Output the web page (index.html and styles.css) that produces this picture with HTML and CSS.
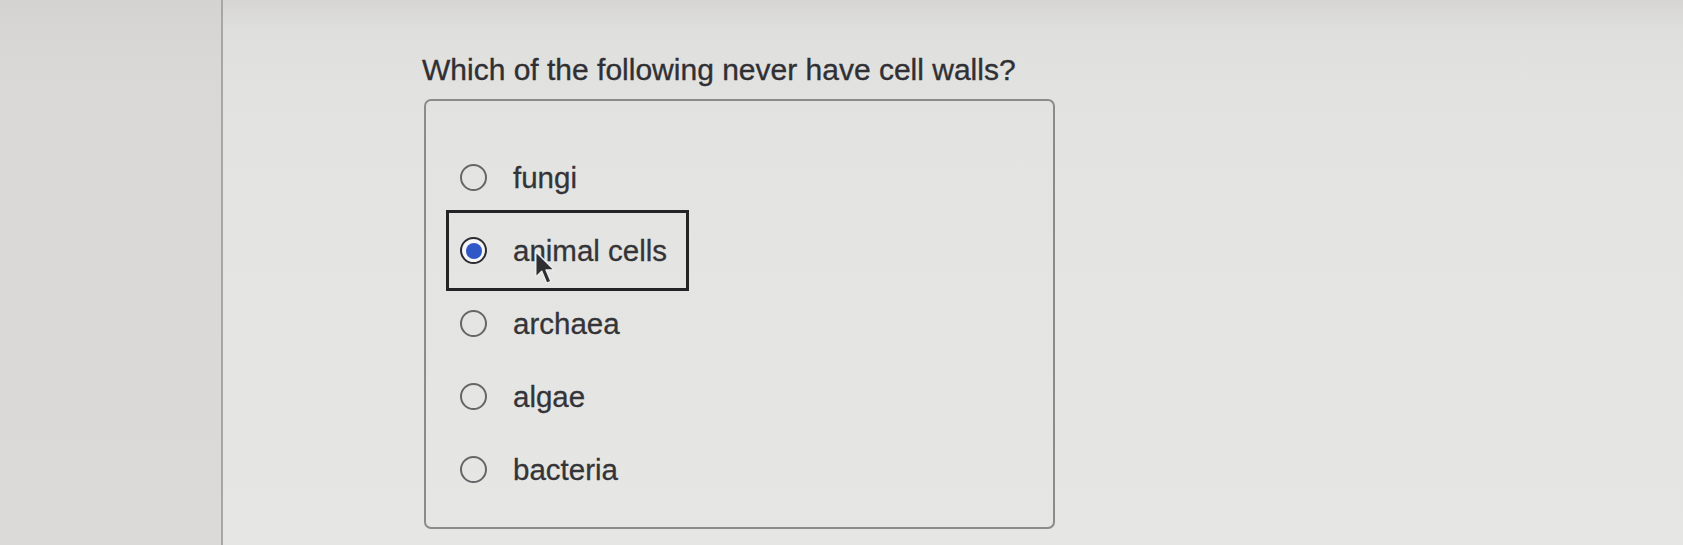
FILE: index.html
```html
<!DOCTYPE html>
<html lang="en">
<head>
<meta charset="utf-8">
<title>Question</title>
<link rel="stylesheet" href="styles.css">
</head>
<body>
<div class="screen">
  <aside class="sidebar"></aside>
  <main class="content">
    <h1 class="question">Which of the following never have cell walls?</h1>
    <div class="choices">
      <label class="choice"><span class="radio"></span><span class="label">fungi</span></label>
      <label class="choice focused"><span class="radio checked"></span><span class="label">animal cells</span></label>
      <label class="choice"><span class="radio"></span><span class="label">archaea</span></label>
      <label class="choice"><span class="radio"></span><span class="label">algae</span></label>
      <label class="choice"><span class="radio"></span><span class="label">bacteria</span></label>
    </div>
  </main>
</div>
<svg class="cursor" width="22" height="36" viewBox="0 0 20 33">
  <path d="M1.5 1.5 L1.5 25 L7 19.5 L11.5 30.5 L15.5 28.8 L11 18.3 L18.5 18.3 Z" fill="#2e2e32" stroke="#ececec" stroke-width="1.4" stroke-linejoin="round"/>
</svg>
</body>
</html>
```
FILE: styles.css
```css
html, body {
  margin: 0;
  padding: 0;
}
body {
  width: 1683px;
  height: 545px;
  overflow: hidden;
  font-family: "Liberation Sans", Arial, Helvetica, sans-serif;
  color: #333336;
  background: #e3e3e1;
}
.screen {
  display: flex;
  height: 545px;
  background: linear-gradient(to bottom, #d6d5d3 0px, #dfdfdd 30px, #e3e3e1 120px, #e6e6e4 545px);
}
.sidebar {
  width: 221px;
  flex: none;
  border-right: 2px solid #a7a6a5;
  background: linear-gradient(to bottom, #d4d3d1 0px, #d9d8d6 60px, #dbdad8 545px);
}
.content {
  flex: 1;
  padding-left: 199px;
  padding-top: 52px;
}
.question {
  margin: 0;
  font-size: 30px;
  line-height: 36px;
  font-weight: normal;
  color: #303034;
  -webkit-text-stroke: 0.35px #303034;
}
.choices {
  margin: 11px 0 0 2px;
  box-sizing: border-box;
  width: 631px;
  height: 430px;
  border: 2px solid #8b8b8b;
  border-radius: 7px;
  display: flex;
  flex-direction: column;
  align-items: flex-start;
  padding: 40px 0 0 24px;
}
.choice {
  display: flex;
  align-items: center;
  height: 73px;
  padding: 0 18px 0 10px;
  gap: 26px;
  font-size: 29.5px;
  color: #343438;
  -webkit-text-stroke: 0.3px #343438;
}
.choice.focused {
  outline: 3px solid #242426;
  outline-offset: 1px;
}
.radio {
  width: 27px;
  height: 27px;
  box-sizing: border-box;
  border: 2.3px solid #666668;
  border-radius: 50%;
  flex: none;
  display: flex;
  align-items: center;
  justify-content: center;
}
.radio.checked {
  border-color: #2a2a32;
  background: #f6f6f8;
}
.radio.checked::after {
  content: "";
  width: 16px;
  height: 16px;
  border-radius: 50%;
  background: #2f57c6;
}
.label {
  line-height: 34px;
}
.cursor {
  position: absolute;
  left: 534px;
  top: 250px;
}
```
